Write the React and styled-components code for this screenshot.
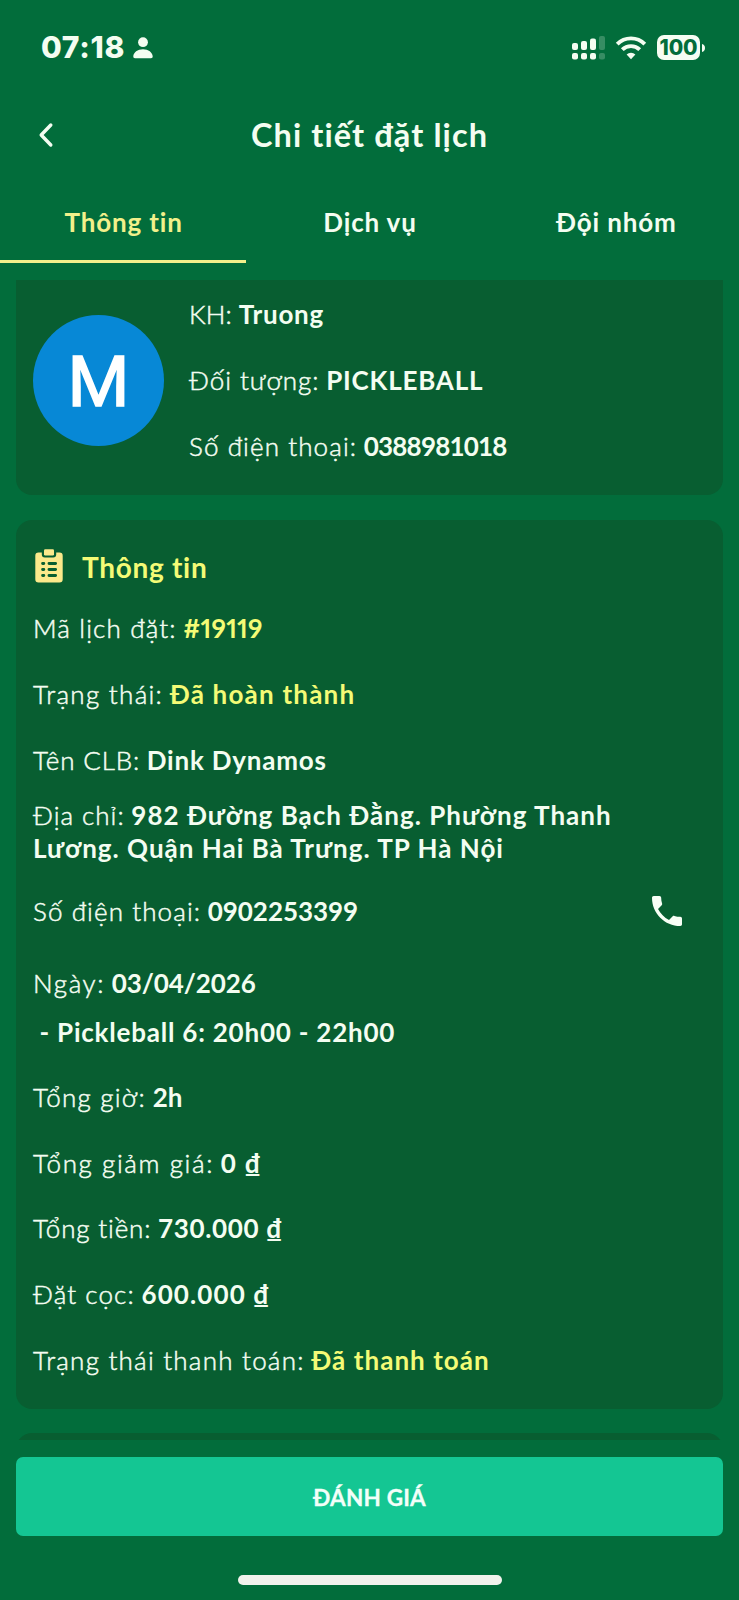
import React from "react";
import styled, { createGlobalStyle } from "styled-components";
import { MdPhone } from "react-icons/md";

const GlobalStyle = createGlobalStyle`
  *, *::before, *::after { box-sizing: border-box; }
  body {
    margin: 0;
    background: #026d3b;
    color: #f4fdf1;
    font-family: Lato, "Noto Sans", sans-serif;
    font-variant-ligatures: none;
  }
`;

const Screen = styled.div`
  display: flex;
  flex-direction: column;
  width: 739px;
  height: 1600px;
  overflow: hidden;
  background: #026d3b;
`;

const StatusBar = styled.header`
  display: flex;
  flex: none;
  align-items: center;
  justify-content: space-between;
  height: 95px;
  padding: 0 34px 0 41px;
`;

const StatusGroup = styled.div`
  display: flex;
  align-items: center;
  gap: ${(p) => p.$gap}px;
`;

const Clock = styled.span`
  padding-bottom: 2px;
  font: 800 30px/36px Inter, sans-serif;
  letter-spacing: 0.7px;
`;

const Battery = styled.div`
  display: flex;
  align-items: center;
  gap: 2px;
`;

const BatteryBody = styled.span`
  display: flex;
  align-items: center;
  justify-content: center;
  width: 43px;
  height: 25px;
  border-radius: 7px;
  background: #f6fdf3;
  color: #026d3b;
  font: 800 21px/25px Inter, sans-serif;
  letter-spacing: -0.1px;
`;

const TitleBar = styled.div`
  display: grid;
  flex: none;
  grid-template-columns: 80px 1fr 80px;
  align-items: center;
  height: 80px;
  padding-bottom: 1px;
`;

const BackButton = styled.button`
  display: flex;
  padding: 0 0 0 38px;
  border: 0;
  background: none;
  color: inherit;
`;

const Title = styled.h1`
  margin: 0;
  text-align: center;
  font-size: 32.5px;
  line-height: 40px;
  font-weight: 700;
  letter-spacing: 1.1px;
`;

const Tabs = styled.nav`
  display: grid;
  flex: none;
  grid-template-columns: repeat(3, 1fr);
  height: 88px;
`;

const Tab = styled.button`
  padding: 10px 0 0 1px;
  border: 0;
  border-bottom: 3px solid ${(p) => (p.$active ? "#f2f08b" : "transparent")};
  background: none;
  color: ${(p) => (p.$active ? "#f2f08b" : "inherit")};
  font: inherit;
  font-size: 26px;
  font-weight: 700;
  line-height: 33px;
  letter-spacing: 0.85px;
`;

const Content = styled.main`
  display: flex;
  flex: none;
  flex-direction: column;
  gap: 24px;
  height: 1160px;
  margin-top: 17px;
  padding: 0 16px;
  overflow: hidden;
`;

const Card = styled.section`
  flex: none;
  border-radius: 16px;
  background: #085e31;
`;

const CustomerCard = styled(Card)`
  display: flex;
  align-items: flex-start;
  gap: 25px;
  height: 215px;
  margin-bottom: 1px;
  padding: 2px 17px 0;
  border-radius: 0 0 16px 16px;
`;

const Avatar = styled.div`
  display: flex;
  align-items: center;
  justify-content: center;
  width: 131px;
  height: 131px;
  margin-top: 32.5px;
  padding-top: 2px;
  border-radius: 50%;
  background: #0788d6;
  color: #fff;
  font: 400 71px/131px Roboto, sans-serif;
  -webkit-text-stroke: 1.5px currentColor;
`;

const BookingCard = styled(Card)`
  height: 889px;
  padding: 17px 17px 0 17px;
`;

const NextCard = styled(Card)`
  height: 120px;
`;

const CardHeading = styled.h2`
  display: flex;
  align-items: center;
  gap: 19px;
  height: 59px;
  margin: 0;
  padding: 0 0 2px 2px;
  color: #f4fb76;
  font-size: 28px;
  font-weight: 700;
  line-height: 34px;
  letter-spacing: 0.7px;

  span { padding-top: 3px; }
`;

const Row = styled.div`
  display: flex;
  align-items: center;
  justify-content: space-between;
  height: ${(p) => p.$height || 65.8}px;
  padding-right: 19px;
`;

const Line = styled.p`
  margin: 0;
  font-size: 26px;
  line-height: 33px;
  white-space: nowrap;
`;

const Label = styled.span`
  font-weight: 300;
  letter-spacing: ${(p) => p.$track}px;
  -webkit-text-stroke: 0.5px currentColor;
`;

const Value = styled.span`
  color: ${(p) => (p.$highlight ? "#f4fb76" : "inherit")};
  font-weight: 700;
  letter-spacing: ${(p) => p.$track}px;
  font-variant-numeric: ${(p) => (p.$narrow ? "proportional-nums" : "normal")};
`;

const Address = styled(Line)`
  height: 78px;
  padding-top: 6px;
`;

const Slot = styled(Line)`
  height: 48px;
  padding-left: 6.5px;
  font-weight: 700;
  letter-spacing: 0.78px;
`;

const CallButton = styled.button`
  display: flex;
  padding: 0;
  border: 0;
  background: none;
  color: #f8fff6;
`;

const ReviewButton = styled.button`
  flex: none;
  height: 79px;
  margin: 17px 16px 0;
  padding: 2px 0 0;
  border: 0;
  border-radius: 7px;
  background: #14c693;
  color: #f3fff9;
  font: 700 22.5px/30px Lato, sans-serif;
  letter-spacing: 0.2px;
  -webkit-text-stroke: 0.3px currentColor;
`;

const HomeIndicator = styled.div`
  flex: none;
  align-self: center;
  width: 264px;
  height: 10px;
  margin-top: 39px;
  border-radius: 5px;
  background: #f1f2ec;
`;

function PersonIcon() {
  return (
    <svg width="20" height="22" viewBox="0 0 20 22" fill="currentColor">
      <circle cx="10" cy="5.2" r="4.9" />
      <path d="M0.3 19.6C0.3 15.4 4.8 12.2 10 12.2s9.7 3.2 9.7 7.4c0 1.1-.6 1.6-1.7 1.6H2c-1.1 0-1.7-.5-1.7-1.6z" />
    </svg>
  );
}

function SignalIcon() {
  const bars = [
    { x: 0, y: 7, h: 7 },
    { x: 9, y: 5, h: 9 },
    { x: 18, y: 2.5, h: 11.5 },
    { x: 27, y: 0, h: 14 },
  ];
  return (
    <svg width="33" height="24" viewBox="0 0 33 24" fill="currentColor">
      {bars.map((b, i) => (
        <g key={b.x} opacity={i === 3 ? 0.22 : 1}>
          <rect x={b.x} y={b.y} width="6" height={b.h} rx="2" />
          <rect x={b.x} y="17" width="6" height="6.5" rx="2" />
        </g>
      ))}
    </svg>
  );
}

function WifiIcon() {
  return (
    <svg width="32" height="24" viewBox="0 0 32 24" fill="none" stroke="currentColor" strokeWidth="3.9">
      <path d="M2.2 8.1a19.5 19.5 0 0 1 27.6 0" />
      <path d="M7.3 13.7a12.3 12.3 0 0 1 17.4 0" />
      <path d="M16 23.2l-4.4-4.6a6.2 6.2 0 0 1 8.8 0z" fill="currentColor" stroke="none" />
    </svg>
  );
}

function ChevronIcon() {
  return (
    <svg width="16" height="26" viewBox="0 0 16 26" fill="none" stroke="currentColor" strokeWidth="3.4" strokeLinecap="round" strokeLinejoin="round">
      <path d="M12.8 3L3.2 13l9.6 10" />
    </svg>
  );
}

function ClipboardIcon() {
  return (
    <svg width="28" height="34" viewBox="0 0 28 34">
      <path
        fill="#fbe98b"
        d="M3.5 3.5H6.8V5.5a3 3 0 0 0 3 3h8.4a3 3 0 0 0 3-3V3.5H24.5A3.2 3.2 0 0 1 27.7 6.700V30.3a3.2 3.2 0 0 1-3.2 3.2H3.5A3.2 3.2 0 0 1 .3 30.3V6.7A3.2 3.2 0 0 1 3.5 3.5z"
      />
      <rect x="9" y="0.3" width="10" height="6.2" rx="1.2" fill="#fbe98b" />
      <g stroke="#085e31" strokeWidth="2.9" strokeLinecap="round">
        <path d="M7.6 14.5h1.2M14 14.5h6.6M7.6 20.5h1.2M14 20.5h6.6M7.6 26.500h1.2M14 26.500h6.6" />
      </g>
    </svg>
  );
}

function Field({ label, labelTrack, value, valueTrack, highlight, narrow, height, action }) {
  return (
    <Row $height={height}>
      <Line>
        <Label $track={labelTrack}>{label}</Label>{" "}
        <Value $track={valueTrack} $highlight={highlight} $narrow={narrow}>
          {value}
        </Value>
      </Line>
      {action}
    </Row>
  );
}

export default function App() {
  return (
    <>
      <GlobalStyle />
      <Screen>
        <StatusBar>
          <StatusGroup $gap={8}>
            <Clock>07:18</Clock>
            <PersonIcon />
          </StatusGroup>
          <StatusGroup $gap={10}>
            <SignalIcon />
            <WifiIcon />
            <Battery>
              <BatteryBody>100</BatteryBody>
              <svg width="3" height="8" viewBox="0 0 3 8" fill="currentColor">
                <path d="M0 0c2 .5 3 2 3 4s-1 3.5-3 4z" />
              </svg>
            </Battery>
          </StatusGroup>
        </StatusBar>

        <TitleBar>
          <BackButton aria-label="Quay lại">
            <ChevronIcon />
          </BackButton>
          <Title>Chi tiết đặt lịch</Title>
        </TitleBar>

        <Tabs>
          <Tab $active>Thông tin</Tab>
          <Tab>Dịch vụ</Tab>
          <Tab>Đội nhóm</Tab>
        </Tabs>

        <Content>
          <CustomerCard>
            <Avatar>M</Avatar>
            <div>
              <Field label="KH:" labelTrack={0.2} value="Truong" valueTrack={0.8} />
              <Field label="Đối tượng:" labelTrack={0.95} value="PICKLEBALL" valueTrack={0.8} />
              <Field label="Số điện thoại:" labelTrack={1.1} value="0388981018" valueTrack={-0.8} />
            </div>
          </CustomerCard>

          <BookingCard>
            <CardHeading>
              <ClipboardIcon />
              <span>Thông tin</span>
            </CardHeading>
            <Field label="Mã lịch đặt:" labelTrack={1.15} value="#19119" valueTrack={0.2} highlight narrow />
            <Field label="Trạng thái:" labelTrack={1.3} value="Đã hoàn thành" valueTrack={1.2} highlight />
            <Field label="Tên CLB:" labelTrack={0.85} value="Dink Dynamos" valueTrack={0.8} />
            <Address>
              <Label $track={1}>Địa chỉ:</Label>{" "}
              <Value $track={1.01}>
                982 Đường Bạch Đằng. Phường Thanh
                <br />
                Lương. Quận Hai Bà Trưng. TP Hà Nội
              </Value>
            </Address>
            <Field
              label="Số điện thoại:"
              labelTrack={1.1}
              value="0902253399"
              valueTrack={-0.05}
              height={80}
              action={
                <CallButton aria-label="Gọi">
                  <MdPhone size={40} />
                </CallButton>
              }
            />
            <Field label="Ngày:" labelTrack={1.6} value="03/04/2026" valueTrack={-0.1} height={65} />
            <Slot>- Pickleball 6: 20h00 - 22h00</Slot>
            <Field label="Tổng giờ:" labelTrack={1.25} value="2h" valueTrack={0} />
            <Field label="Tổng giảm giá:" labelTrack={1.6} value="0 ₫" valueTrack={1.4} />
            <Field label="Tổng tiền:" labelTrack={0.85} value="730.000 ₫" valueTrack={0.65} />
            <Field label="Đặt cọc:" labelTrack={1.1} value="600.000 ₫" valueTrack={1.1} />
            <Field label="Trạng thái thanh toán:" labelTrack={1.23} value="Đã thanh toán" valueTrack={1.05} highlight />
          </BookingCard>

          <NextCard />
        </Content>

        <ReviewButton>ĐÁNH GIÁ</ReviewButton>
        <HomeIndicator />
      </Screen>
    </>
  );
}
